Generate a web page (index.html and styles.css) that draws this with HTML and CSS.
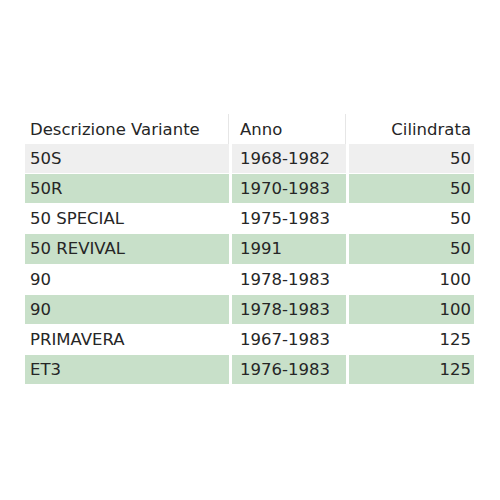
FILE: index.html
```html
<!DOCTYPE html>
<html>
<head>
<meta charset="utf-8">
<link rel="stylesheet" href="styles.css">
</head>
<body>
<div class="wrap">
<table class="grid">
<thead>
<tr><th class="c1">Descrizione Variante</th><th class="c2">Anno</th><th class="c3">Cilindrata</th></tr>
</thead>
<tbody>
<tr class="grey"><td class="c1">50S</td><td class="c2">1968-1982</td><td class="c3">50</td></tr>
<tr class="green"><td class="c1">50R</td><td class="c2">1970-1983</td><td class="c3">50</td></tr>
<tr><td class="c1">50 SPECIAL</td><td class="c2">1975-1983</td><td class="c3">50</td></tr>
<tr class="green"><td class="c1">50 REVIVAL</td><td class="c2">1991</td><td class="c3">50</td></tr>
<tr><td class="c1">90</td><td class="c2">1978-1983</td><td class="c3">100</td></tr>
<tr class="green"><td class="c1">90</td><td class="c2">1978-1983</td><td class="c3">100</td></tr>
<tr><td class="c1">PRIMAVERA</td><td class="c2">1967-1983</td><td class="c3">125</td></tr>
<tr class="green"><td class="c1">ET3</td><td class="c2">1976-1983</td><td class="c3">125</td></tr>
</tbody>
</table>
</div>
</body>
</html>
```
FILE: styles.css
```css
html, body {
  margin: 0;
  padding: 0;
  background: #fff;
}
.wrap {
  padding: 114px 0 0 22px;
}
.grid {
  border-collapse: separate;
  border-spacing: 3px 0;
  font-family: "DejaVu Sans", Verdana, sans-serif;
  font-size: 16.5px;
  color: #262626;
}
.grid th {
  font-weight: normal;
  height: 30px;
  box-sizing: border-box;
  padding: 0;
}
.grid td {
  height: 30.15px;
  box-sizing: border-box;
  padding: 0;
  border-bottom: 1px solid #fff;
}
.c1 { width: 204px; padding-left: 5px !important; text-align: left; }
.c2 { width: 114px; padding-left: 8px !important; text-align: left; }
.c3 { width: 125px; padding-right: 3px !important; text-align: right; }
.grid th.c1, .grid th.c2 { border-right: 1px solid #e6e6e6; }
.grey td { background: #efefef; }
.green td { background: #c8e0c9; }
```
